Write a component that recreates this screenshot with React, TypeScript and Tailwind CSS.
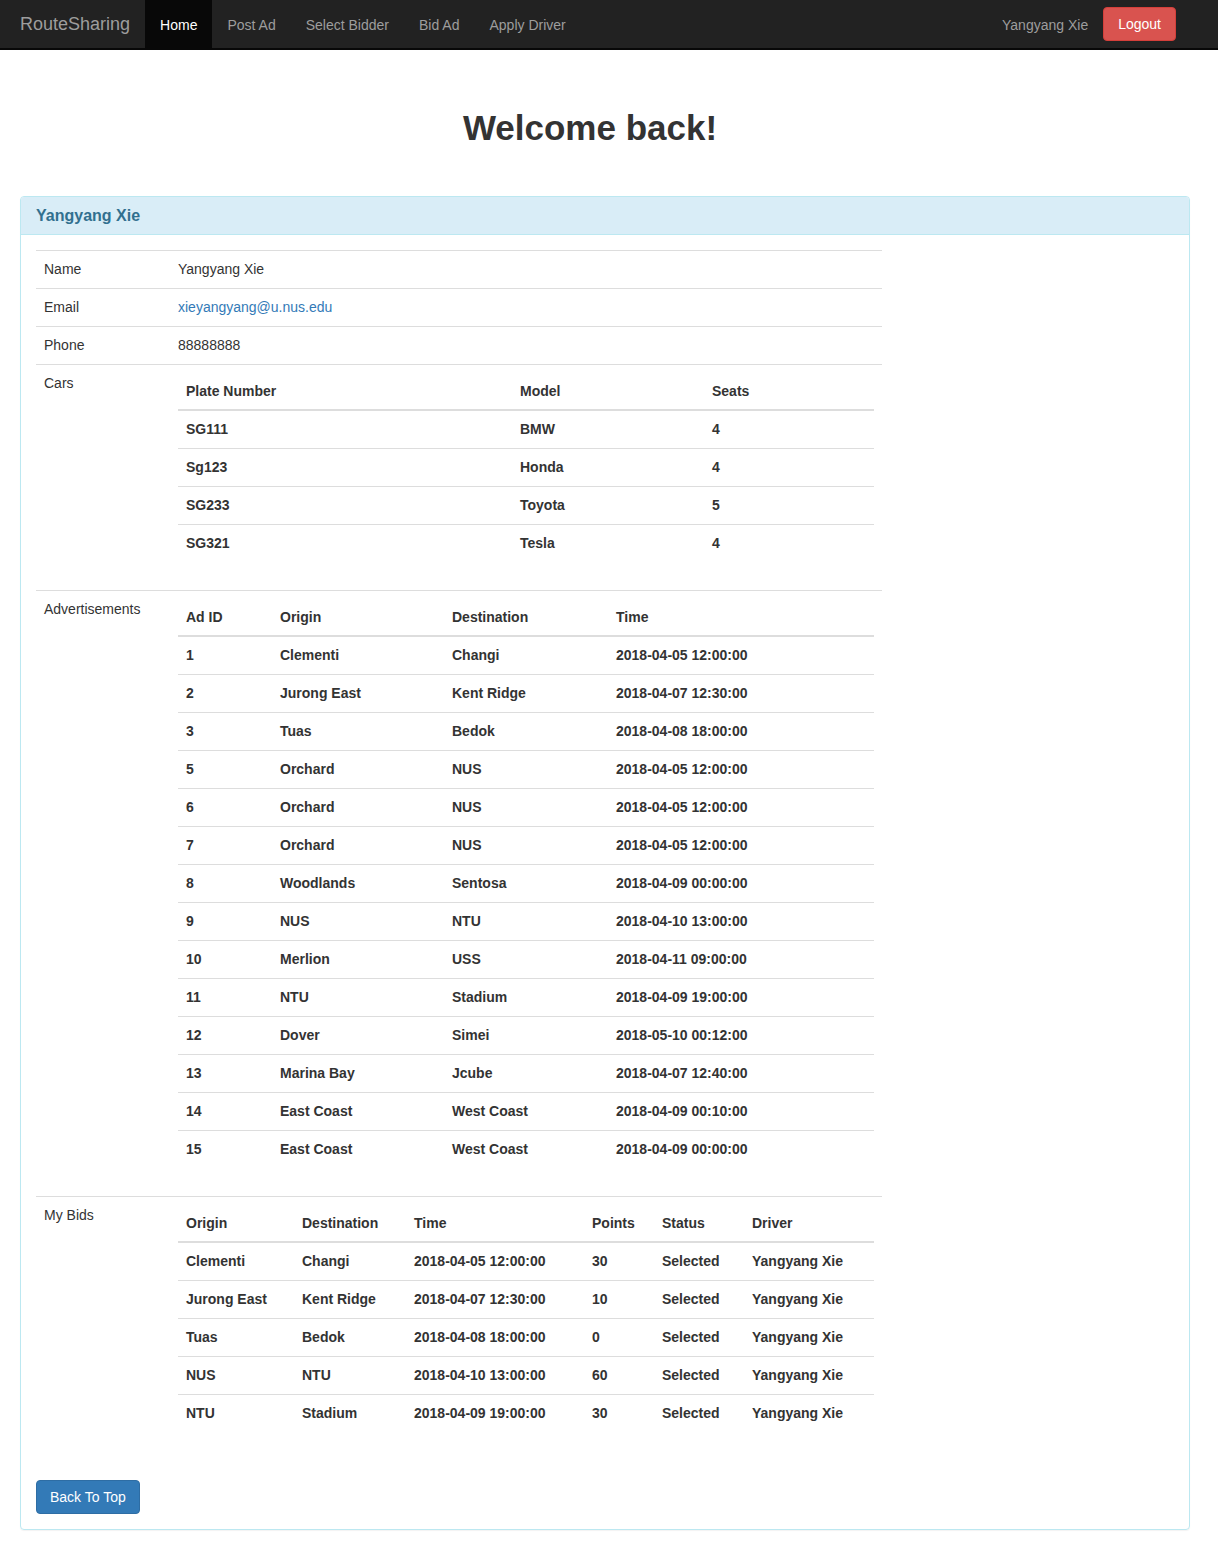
import React from "react";

const cars = [
  ["SG111", "BMW", "4"],
  ["Sg123", "Honda", "4"],
  ["SG233", "Toyota", "5"],
  ["SG321", "Tesla", "4"],
];

const ads = [
  ["1", "Clementi", "Changi", "2018-04-05 12:00:00"],
  ["2", "Jurong East", "Kent Ridge", "2018-04-07 12:30:00"],
  ["3", "Tuas", "Bedok", "2018-04-08 18:00:00"],
  ["5", "Orchard", "NUS", "2018-04-05 12:00:00"],
  ["6", "Orchard", "NUS", "2018-04-05 12:00:00"],
  ["7", "Orchard", "NUS", "2018-04-05 12:00:00"],
  ["8", "Woodlands", "Sentosa", "2018-04-09 00:00:00"],
  ["9", "NUS", "NTU", "2018-04-10 13:00:00"],
  ["10", "Merlion", "USS", "2018-04-11 09:00:00"],
  ["11", "NTU", "Stadium", "2018-04-09 19:00:00"],
  ["12", "Dover", "Simei", "2018-05-10 00:12:00"],
  ["13", "Marina Bay", "Jcube", "2018-04-07 12:40:00"],
  ["14", "East Coast", "West Coast", "2018-04-09 00:10:00"],
  ["15", "East Coast", "West Coast", "2018-04-09 00:00:00"],
];

const bids = [
  ["Clementi", "Changi", "2018-04-05 12:00:00", "30", "Selected", "Yangyang Xie"],
  ["Jurong East", "Kent Ridge", "2018-04-07 12:30:00", "10", "Selected", "Yangyang Xie"],
  ["Tuas", "Bedok", "2018-04-08 18:00:00", "0", "Selected", "Yangyang Xie"],
  ["NUS", "NTU", "2018-04-10 13:00:00", "60", "Selected", "Yangyang Xie"],
  ["NTU", "Stadium", "2018-04-09 19:00:00", "30", "Selected", "Yangyang Xie"],
];

function Nested({ headers, widths, rows }: { headers: string[]; widths: string[]; rows: string[][] }) {
  return (
    <table className="w-full border-collapse mb-5 table-fixed">
      <thead>
        <tr>
          {headers.map((h, i) => (
            <th key={h} className={`${widths[i]} text-left font-bold p-2 leading-5 border-b-2 border-[#ddd]`}>
              {h}
            </th>
          ))}
        </tr>
      </thead>
      <tbody>
        {rows.map((r, ri) => (
          <tr key={ri}>
            {r.map((c, ci) => (
              <td key={ci} className="p-2 leading-[21px] font-bold border-t border-[#ddd] whitespace-nowrap">
                {c}
              </td>
            ))}
          </tr>
        ))}
      </tbody>
    </table>
  );
}

export default function App() {
  const font = { fontFamily: '"Liberation Sans", Arial, Helvetica, sans-serif' };
  return (
    <div className="min-h-[1548px] bg-white text-[#333] text-[14px] leading-5" style={font}>
      {/* Navbar */}
      <nav className="h-[50px] bg-[#222] border-b-2 border-[#080808] flex items-stretch">
        <div className="pl-[20px] pr-[15px] flex items-center text-[18px] text-[#9d9d9d]">RouteSharing</div>
        <div className="flex items-stretch">
          <div className="bg-[#080808] text-white px-[15px] flex items-center pt-[1px]">Home</div>
          <div className="text-[#9d9d9d] px-[15px] flex items-center pt-[1px]">Post Ad</div>
          <div className="text-[#9d9d9d] px-[15px] flex items-center pt-[1px]">Select Bidder</div>
          <div className="text-[#9d9d9d] px-[15px] flex items-center pt-[1px]">Bid Ad</div>
          <div className="text-[#9d9d9d] px-[15px] flex items-center pt-[1px]">Apply Driver</div>
        </div>
        <div className="flex-1" />
        <div className="text-[#9d9d9d] flex items-center pt-[1px] mr-[15px]">Yangyang Xie</div>
        <div className="flex items-start pt-[7px] mr-[42px]">
          <div className="bg-[#d9534f] border border-[#d43f3a] text-white rounded-[4px] px-[14px] py-[6px] leading-5">
            Logout
          </div>
        </div>
      </nav>

      {/* Heading */}
      <div className="w-[1180px] pt-[58px] pb-[48px]">
        <h1 className="text-center text-[35px] leading-[40px] font-bold text-[#333]">Welcome back!</h1>
      </div>

      {/* Panel */}
      <div className="ml-[20px] w-[1170px] border border-[#bce8f1] rounded-[4px] shadow-[0_1px_1px_rgba(0,0,0,0.05)]">
        <div className="bg-[#d9edf7] border-b border-[#bce8f1] px-[15px] h-[38px] flex items-center rounded-t-[3px]">
          <span className="text-[16px] text-[#31708f] font-bold">Yangyang Xie</span>
        </div>
        <div className="p-[15px]">
          <table className="w-[846px] border-collapse mb-5">
            <tbody>
              <tr>
                <td className="w-[134px] p-2 leading-[21px] border-t border-[#ddd] align-top">Name</td>
                <td className="p-2 leading-[21px] border-t border-[#ddd]">Yangyang Xie</td>
              </tr>
              <tr>
                <td className="p-2 leading-[21px] border-t border-[#ddd] align-top">Email</td>
                <td className="p-2 leading-[21px] border-t border-[#ddd] text-[#337ab7]">xieyangyang@u.nus.edu</td>
              </tr>
              <tr>
                <td className="p-2 leading-[21px] border-t border-[#ddd] align-top">Phone</td>
                <td className="p-2 leading-[21px] border-t border-[#ddd]">88888888</td>
              </tr>
              <tr>
                <td className="p-2 leading-[21px] border-t border-[#ddd] align-top">Cars</td>
                <td className="p-2 border-t border-[#ddd]">
                  <Nested
                    headers={["Plate Number", "Model", "Seats"]}
                    widths={["w-[334px]", "w-[192px]", ""]}
                    rows={cars}
                  />
                </td>
              </tr>
              <tr>
                <td className="p-2 leading-[21px] border-t border-[#ddd] align-top">Advertisements</td>
                <td className="p-2 border-t border-[#ddd]">
                  <Nested
                    headers={["Ad ID", "Origin", "Destination", "Time"]}
                    widths={["w-[94px]", "w-[172px]", "w-[164px]", ""]}
                    rows={ads}
                  />
                </td>
              </tr>
              <tr>
                <td className="p-2 leading-[21px] border-t border-[#ddd] align-top">My Bids</td>
                <td className="p-2 border-t border-[#ddd]">
                  <Nested
                    headers={["Origin", "Destination", "Time", "Points", "Status", "Driver"]}
                    widths={["w-[116px]", "w-[112px]", "w-[178px]", "w-[70px]", "w-[90px]", ""]}
                    rows={bids}
                  />
                </td>
              </tr>
            </tbody>
          </table>
          <div className="inline-block bg-[#337ab7] border border-[#2e6da4] text-white rounded-[4px] px-[13px] py-[6px] leading-5">
            Back To Top
          </div>
        </div>
      </div>
    </div>
  );
}
